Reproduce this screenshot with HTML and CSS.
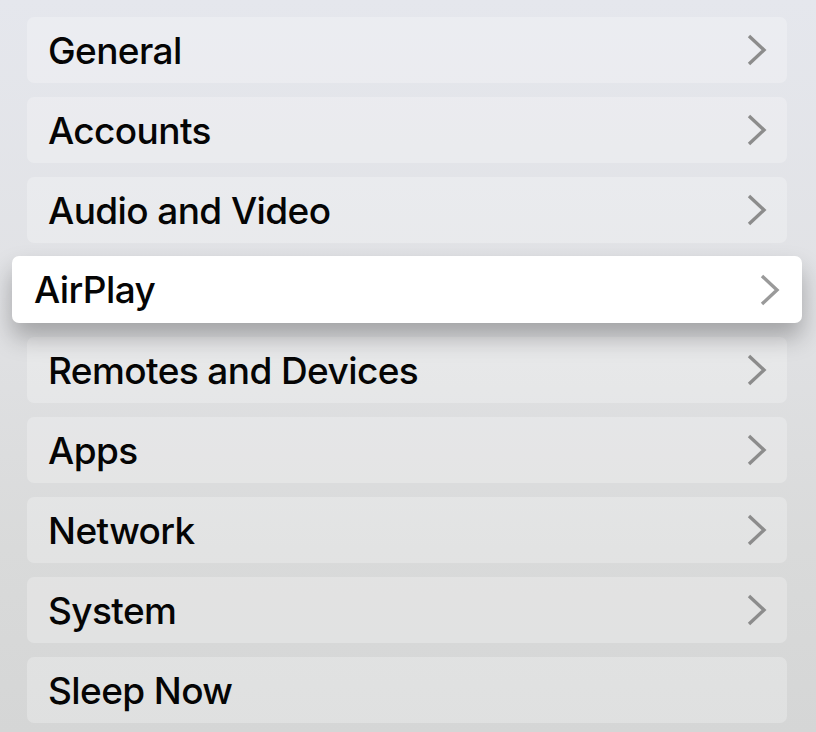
FILE: index.html
```html
<!DOCTYPE html>
<html>
<head>
<meta charset="utf-8">
<link rel="stylesheet" href="styles.css">
</head>
<body>
<ul class="menu">
  <li class="row"><span class="label">General</span><svg class="chev" viewBox="0 0 20 32"><path d="M2 2 L17 16 L2 30"/></svg></li>
  <li class="row"><span class="label">Accounts</span><svg class="chev" viewBox="0 0 20 32"><path d="M2 2 L17 16 L2 30"/></svg></li>
  <li class="row"><span class="label">Audio and Video</span><svg class="chev" viewBox="0 0 20 32"><path d="M2 2 L17 16 L2 30"/></svg></li>
  <li class="row focused"><span class="label">AirPlay</span><svg class="chev" viewBox="0 0 20 32"><path d="M2 2 L17 16 L2 30"/></svg></li>
  <li class="row"><span class="label">Remotes and Devices</span><svg class="chev" viewBox="0 0 20 32"><path d="M2 2 L17 16 L2 30"/></svg></li>
  <li class="row"><span class="label">Apps</span><svg class="chev" viewBox="0 0 20 32"><path d="M2 2 L17 16 L2 30"/></svg></li>
  <li class="row"><span class="label">Network</span><svg class="chev" viewBox="0 0 20 32"><path d="M2 2 L17 16 L2 30"/></svg></li>
  <li class="row"><span class="label">System</span><svg class="chev" viewBox="0 0 20 32"><path d="M2 2 L17 16 L2 30"/></svg></li>
  <li class="row"><span class="label">Sleep Now</span></li>
</ul>
</body>
</html>
```
FILE: styles.css
```css
html, body {
  margin: 0;
  padding: 0;
  height: 732px;
  overflow: hidden;
}
body {
  background: linear-gradient(180deg, #e5e7ed 0%, #e1e2e5 40%, #d9dada 75%, #d5d6d6 100%);
  font-family: Inter, "Noto Sans", sans-serif;
}
.menu {
  list-style: none;
  margin: 0;
  padding: 17px 29px 0 27px;
  display: flex;
  flex-direction: column;
  gap: 14px;
}
.row {
  height: 66px;
  border-radius: 7px;
  background: rgba(255, 255, 255, 0.25);
  display: flex;
  align-items: center;
  justify-content: space-between;
  padding: 0 20px 0 21px;
  box-sizing: border-box;
}
.label {
  font-size: 37px;
  font-weight: 500;
  color: #050505;
  letter-spacing: -0.6px;
}
.chev {
  width: 20px;
  height: 32px;
}
.chev path {
  fill: none;
  stroke: #8c8c8c;
  stroke-width: 3.4;
}
.focused {
  position: relative;
  z-index: 1;
  height: 67px;
  margin: -1px -15px 0 -15px;
  padding: 0 22px 0 22px;
  background: #ffffff;
  box-shadow: 0 14px 24px rgba(0, 0, 0, 0.28);
}
.focused .chev path {
  stroke: #9a9a9a;
}
```
